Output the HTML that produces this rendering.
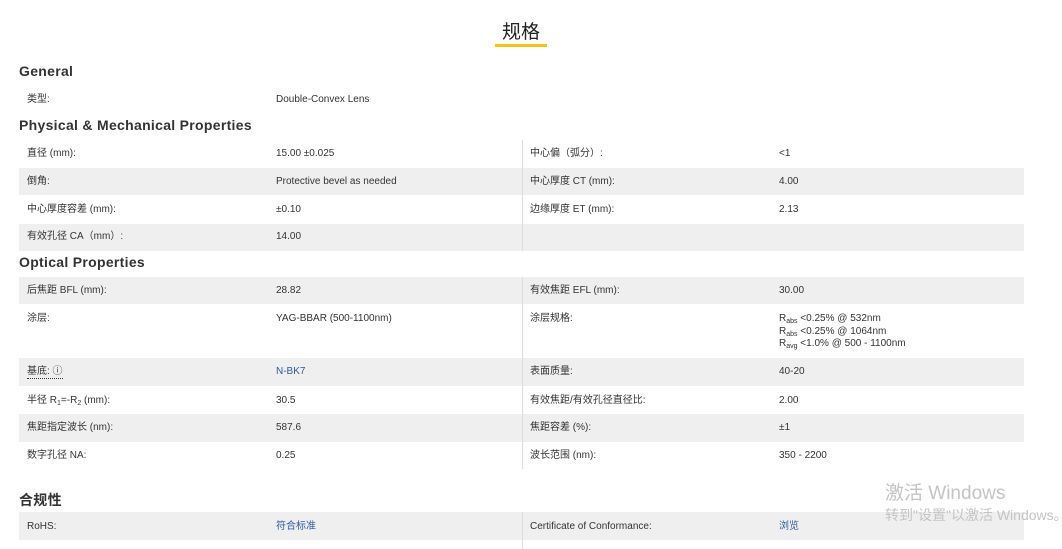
<!DOCTYPE html>
<html><head><meta charset="utf-8"><style>
*{margin:0;padding:0;box-sizing:border-box}
body{width:1062px;height:549px;background:#fff;position:relative;overflow:hidden;font-family:"Liberation Sans","Noto Sans CJK SC",sans-serif;color:#333;}
.a{position:absolute;white-space:nowrap}
.t{font-size:10px;line-height:12px}
.h{font-size:14px;font-weight:bold;color:#333;letter-spacing:0.3px}
.g{position:absolute;left:19px;width:1005px;background:#efefef}
.b{color:#2c5aa0}
sub{font-size:7px;vertical-align:-2px;line-height:0}
</style></head><body>
<div class="a" style="left:502px;top:17px;font-size:19px;color:#222">规格</div>
<div class="a" style="left:495px;top:44px;width:52px;height:3px;background:#f0c419"></div>

<div class="a h" style="left:19px;top:63px">General</div>
<div class="a t" style="left:27px;top:94px">类型:</div>
<div class="a t" style="left:276px;top:94px">Double-Convex Lens</div>

<div class="a h" style="left:19px;top:117px">Physical &amp; Mechanical Properties</div>
<div class="g" style="top:168px;height:27px"></div>
<div class="g" style="top:224px;height:27px"></div>
<div class="a" style="left:522px;top:140px;width:1px;height:111px;background:#ddd"></div>
<div class="a t" style="left:27px;top:148px">直径 (mm):</div><div class="a t" style="left:276px;top:148px">15.00 ±0.025</div>
<div class="a t" style="left:530px;top:148px">中心偏（弧分）:</div><div class="a t" style="left:779px;top:148px">&lt;1</div>
<div class="a t" style="left:27px;top:176px">倒角:</div><div class="a t" style="left:276px;top:176px">Protective bevel as needed</div>
<div class="a t" style="left:530px;top:176px">中心厚度 CT (mm):</div><div class="a t" style="left:779px;top:176px">4.00</div>
<div class="a t" style="left:27px;top:204px">中心厚度容差 (mm):</div><div class="a t" style="left:276px;top:204px">±0.10</div>
<div class="a t" style="left:530px;top:204px">边缘厚度 ET (mm):</div><div class="a t" style="left:779px;top:204px">2.13</div>
<div class="a t" style="left:27px;top:231px">有效孔径 CA（mm）:</div><div class="a t" style="left:276px;top:231px">14.00</div>

<div class="a h" style="left:19px;top:254px">Optical Properties</div>
<div class="g" style="top:277px;height:27px"></div>
<div class="g" style="top:358px;height:28px"></div>
<div class="g" style="top:414px;height:28px"></div>
<div class="a" style="left:522px;top:277px;width:1px;height:192px;background:#ddd"></div>
<div class="a t" style="left:27px;top:285px">后焦距 BFL (mm):</div><div class="a t" style="left:276px;top:285px">28.82</div>
<div class="a t" style="left:530px;top:285px">有效焦距 EFL (mm):</div><div class="a t" style="left:779px;top:285px">30.00</div>
<div class="a t" style="left:27px;top:313px">涂层:</div><div class="a t" style="left:276px;top:313px">YAG-BBAR (500-1100nm)</div>
<div class="a t" style="left:530px;top:313px">涂层规格:</div>
<div class="a t" style="left:779px;top:313px;line-height:12.5px">R<sub>abs</sub> &lt;0.25% @ 532nm<br>R<sub>abs</sub> &lt;0.25% @ 1064nm<br>R<sub>avg</sub> &lt;1.0% @ 500 - 1100nm</div>
<div class="a t" style="left:27px;top:366px;border-bottom:1px dotted #333">基底: ⓘ</div><div class="a t b" style="left:276px;top:366px">N-BK7</div>
<div class="a t" style="left:530px;top:366px">表面质量:</div><div class="a t" style="left:779px;top:366px">40-20</div>
<div class="a t" style="left:27px;top:395px">半径 R<sub>1</sub>=-R<sub>2</sub> (mm):</div><div class="a t" style="left:276px;top:395px">30.5</div>
<div class="a t" style="left:530px;top:395px">有效焦距/有效孔径直径比:</div><div class="a t" style="left:779px;top:395px">2.00</div>
<div class="a t" style="left:27px;top:422px">焦距指定波长 (nm):</div><div class="a t" style="left:276px;top:422px">587.6</div>
<div class="a t" style="left:530px;top:422px">焦距容差 (%):</div><div class="a t" style="left:779px;top:422px">±1</div>
<div class="a t" style="left:27px;top:450px">数字孔径 NA:</div><div class="a t" style="left:276px;top:450px">0.25</div>
<div class="a t" style="left:530px;top:450px">波长范围 (nm):</div><div class="a t" style="left:779px;top:450px">350 - 2200</div>

<div class="a h" style="left:19px;top:490px">合规性</div>
<div class="g" style="top:512px;height:28px"></div>
<div class="a" style="left:522px;top:512px;width:1px;height:37px;background:#ddd"></div>
<div class="a t" style="left:27px;top:521px">RoHS:</div><div class="a t b" style="left:276px;top:521px">符合标准</div>
<div class="a t" style="left:530px;top:521px">Certificate of Conformance:</div><div class="a t b" style="left:779px;top:521px">浏览</div>

<div class="a" style="left:885px;top:478px;font-size:19px;color:#c4c4c4">激活 Windows</div>
<div class="a" style="left:885px;top:505px;font-size:14px;color:#c4c4c4">转到"设置"以激活 Windows。</div>
</body></html>
